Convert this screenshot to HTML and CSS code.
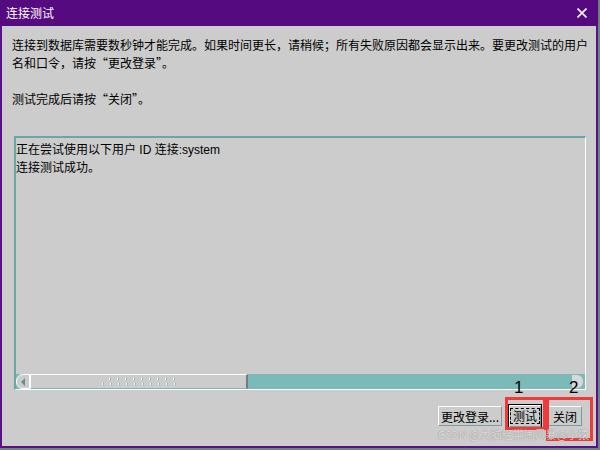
FILE: index.html
```html
<!DOCTYPE html>
<html lang="zh-CN">
<head>
<meta charset="UTF-8" />
<title>连接测试</title>
<link rel="stylesheet" href="styles.css">
</head>
<body>

<div class="window">
    <div class="titlebar">
        <span class="title">连接测试</span>
        <svg class="close" width="10" height="10" viewBox="0 0 10 10">
            <path d="M0.5 0.5 L9.5 9.5 M9.5 0.5 L0.5 9.5" stroke="#fff" stroke-width="1.6" fill="none" />
        </svg>
    </div>

    <div class="content">
        <p class="intro first">连接到数据库需要数秒钟才能完成。如果时间更长，请稍候；所有失败原因都会显示出来。要更改测试的用户<br>名和口令，请按“更改登录”。</p>
        <p class="intro">测试完成后请按“关闭”。</p>

        <div class="log">
            <div class="log-text">正在尝试使用以下用户 ID 连接:system<br>连接测试成功。</div>
            <div class="hscroll">
                <div class="arrow-left"><span class="tri"></span></div>
                <div class="thumb">
                    <div class="grip grip-top"></div>
                    <div class="grip grip-bottom"></div>
                </div>
                <div class="trough"></div>
                <div class="arrow-right"></div>
            </div>
        </div>

        <div class="actions">
            <button class="btn btn-login">更改登录...</button>
            <button class="btn btn-default"><span class="focus">测试</span></button>
            <button class="btn btn-close">关闭</button>
        </div>
    </div>

    <!-- annotations on top of the screenshot -->
    <div class="mark mark-1"></div>
    <div class="mark mark-2"></div>
    <span class="num num-1">1</span>
    <span class="num num-2">2</span>
    <span class="watermark">CSDN @大脑经常闹风暴@小猿</span>
</div>

</body>
</html>
```

FILE: styles.css
```css
body {
    margin: 0;
    width: 600px;
    height: 450px;
    overflow: hidden;
    background: #6f8282;
    font-family: "Noto Sans CJK SC", "Liberation Sans", sans-serif;
    font-size: 12px;
    color: #000;
}
.window {
    position: relative;
    box-sizing: border-box;
    width: 598px;
    height: 448px;
    background: #cccccc;
    border: 2px solid #5a1089;
    border-top: none;
}
.titlebar {
    height: 26px;
    margin: 0 -2px;
    padding: 0 11px 0 6px;
    background: #560a80;
    color: #fff;
    display: flex;
    align-items: center;
    justify-content: space-between;
}
.title {
    font-size: 12px;
    line-height: 26px;
}
.content {
    padding: 10px 10px 0 10px;
}
.intro {
    margin: 0;
    line-height: 18px;
    white-space: nowrap;
}
.intro.first {
    margin-bottom: 18px;
}
.log {
    box-sizing: border-box;
    margin: 28px 0 0 2px;
    height: 254px;
    border-top: 2px solid #6aa8a7;
    border-left: 2px solid #6aa8a7;
    border-right: 1px solid #fff;
    border-bottom: 1px solid #fff;
    display: flex;
    flex-direction: column;
}
.log-text {
    flex: 1;
    padding-top: 3px;
    line-height: 18px;
    font-family: "Liberation Sans", "Noto Sans CJK SC", sans-serif;
}
.hscroll {
    height: 15px;
    display: flex;
    background: #7bbab9;
}
.arrow-left {
    box-sizing: border-box;
    width: 14px;
    background: #cccccc;
    border: 1px solid #fff;
    border-radius: 7px 0 0 7px;
    display: flex;
    align-items: center;
    justify-content: center;
}
.tri {
    width: 0;
    height: 0;
    border-top: 4px solid transparent;
    border-bottom: 4px solid transparent;
    border-right: 4px solid #5f8f8f;
}
.thumb {
    box-sizing: border-box;
    width: 218px;
    background: #cccccc;
    border-top: 1px solid #fff;
    border-left: 1px solid #fff;
    border-right: 2px solid #7a7a7a;
    border-bottom: 1px solid #7bbab9;
    display: flex;
    flex-direction: column;
    align-items: center;
    justify-content: center;
    gap: 3px;
}
.grip {
    height: 2px;
    background: repeating-linear-gradient(90deg, #fff 0 1px, #7bbab9 1px 2px, transparent 2px 8px);
}
.grip-top {
    width: 66px;
    margin-left: 6px;
}
.grip-bottom {
    width: 74px;
}
.trough {
    flex: 1;
}
.arrow-right {
    width: 11px;
    margin: 1px 2px 1px 0;
    background: #d8d8d8;
    border-radius: 0 6px 6px 0;
}
.actions {
    display: flex;
    justify-content: flex-end;
    align-items: center;
    gap: 6px;
    margin-top: 14px;
    padding-right: 4px;
}
.btn {
    box-sizing: border-box;
    height: 20px;
    padding: 0;
    background: #cccccc;
    border: 1px solid;
    border-color: #fff #7f9a9a #7f9a9a #fff;
    font-family: inherit;
    font-size: 12px;
    color: #000;
}
.btn-login {
    width: 64px;
}
.btn-close {
    width: 34px;
}
.btn-default {
    width: 34px;
    height: 24px;
    border: 1px solid #000;
    box-shadow: inset 1px 1px #fff, inset -1px -1px #7f9a9a;
    display: flex;
    align-items: center;
    justify-content: center;
}
.focus {
    border: 1px dashed #000;
    padding: 0 2px;
    line-height: 14px;
}
.mark {
    position: absolute;
    box-sizing: border-box;
    border: 3px solid #f03a3a;
}
.mark-1 {
    left: 503px;
    top: 397px;
    width: 41px;
    height: 33px;
}
.mark-2 {
    left: 544px;
    top: 397px;
    width: 47px;
    height: 44px;
}
.num {
    position: absolute;
    font-family: "Liberation Sans", sans-serif;
    font-size: 17px;
    line-height: 17px;
    color: #000;
}
.num-1 {
    left: 512px;
    top: 379px;
}
.num-2 {
    left: 567px;
    top: 379px;
}
.watermark {
    position: absolute;
    left: 436px;
    top: 427px;
    font-size: 11px;
    line-height: 14px;
    color: rgba(240, 240, 240, 0.85);
    text-shadow: 0 0 1px rgba(70, 70, 70, 0.7);
    white-space: nowrap;
}
```
